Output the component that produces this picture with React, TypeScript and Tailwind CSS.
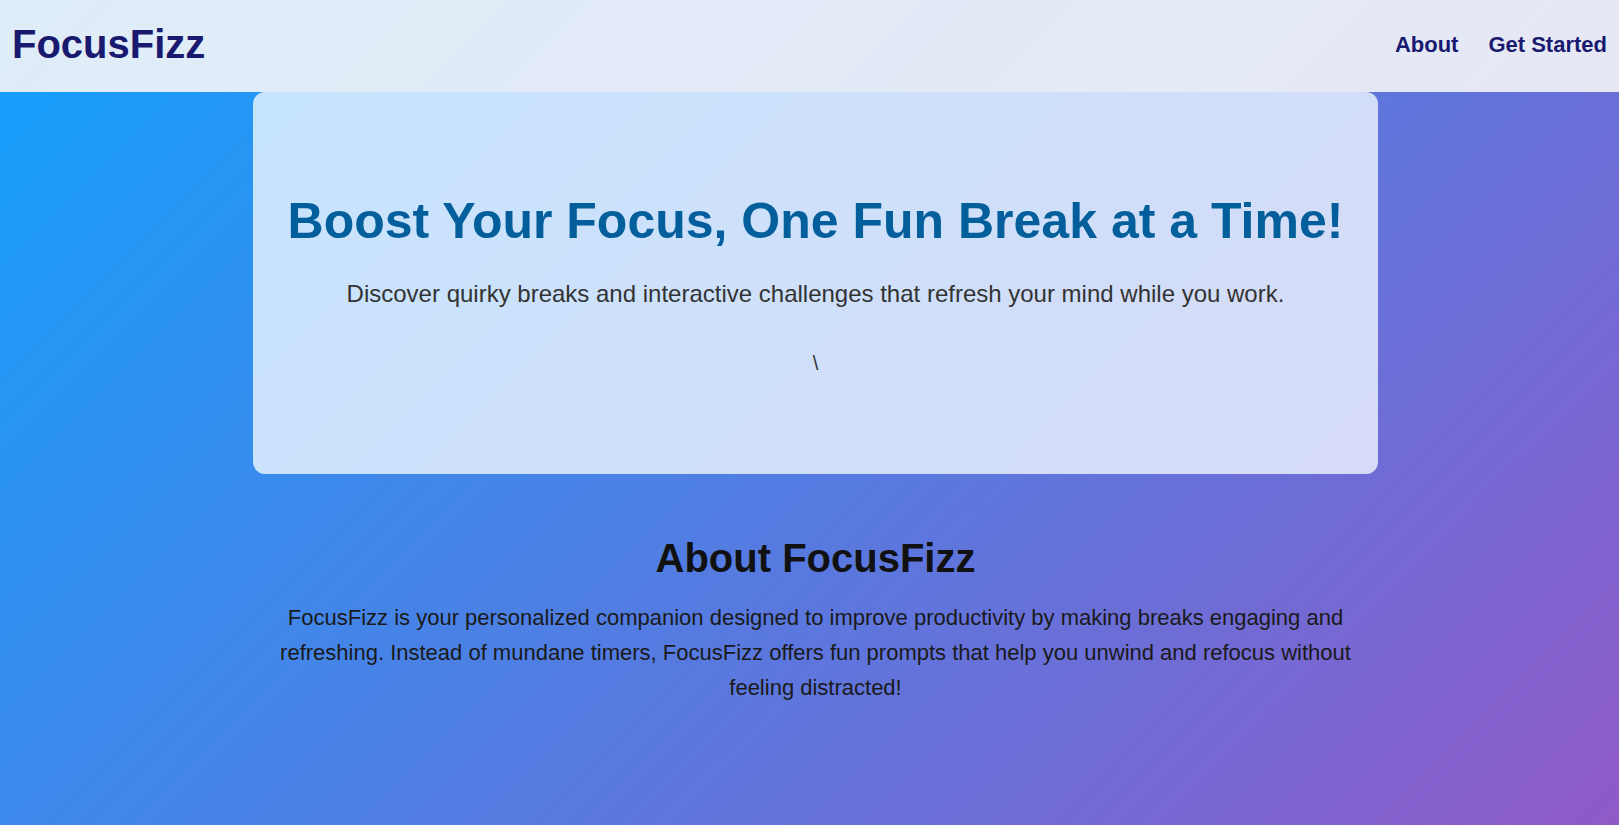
import React from 'react';

const navLinks = ['About', 'Get Started'];

function Header() {
  return (
    <header className="flex h-[92px] items-center justify-between bg-[rgba(241,243,247,0.92)] pl-[12px] pr-[12px]">
      <h1 className="pb-[3px] text-[40px] font-bold leading-[normal] text-[#191970]">FocusFizz</h1>
      <nav className="flex items-center gap-[30px] pb-[3px]">
        {navLinks.map((link) => (
          <a key={link} href="#" className="text-[22px] font-bold leading-[normal] text-[#191970] no-underline">
            {link}
          </a>
        ))}
      </nav>
    </header>
  );
}

function Hero() {
  return (
    <section className="h-[382px] w-[1125px] rounded-[12px] bg-[rgba(240,248,255,0.8)] pt-[100px] text-center">
      <h2 className="text-[50px] font-bold leading-[normal] text-[#035f9c]">
        Boost Your Focus, One Fun Break at a Time!
      </h2>
      <p className="mt-[30px] text-[24px] leading-[normal] text-[#333]">
        Discover quirky breaks and interactive challenges that refresh your mind while you work.
      </p>
      <p className="mt-[44px] text-[20px] leading-[normal] text-[#333]">\</p>
    </section>
  );
}

function About() {
  return (
    <section className="mt-[62px] flex flex-col items-center text-center">
      <h2 className="text-[40px] font-bold leading-[normal] text-[#111]">About FocusFizz</h2>
      <p className="mt-[19px] max-w-[1100px] text-[22px] leading-[35.2px] text-[#1a1a1a]">
        FocusFizz is your personalized companion designed to improve productivity by making breaks engaging and
        refreshing. Instead of mundane timers, FocusFizz offers fun prompts that help you unwind and refocus without
        feeling distracted!
      </p>
    </section>
  );
}

export default function App() {
  return (
    <div className="min-h-screen bg-[linear-gradient(135deg,#12a1fd,#8f5ac8)] font-['Liberation_Sans',Arial,sans-serif]">
      <Header />
      <main className="flex flex-col items-center pl-[12px]">
        <Hero />
        <About />
      </main>
    </div>
  );
}
